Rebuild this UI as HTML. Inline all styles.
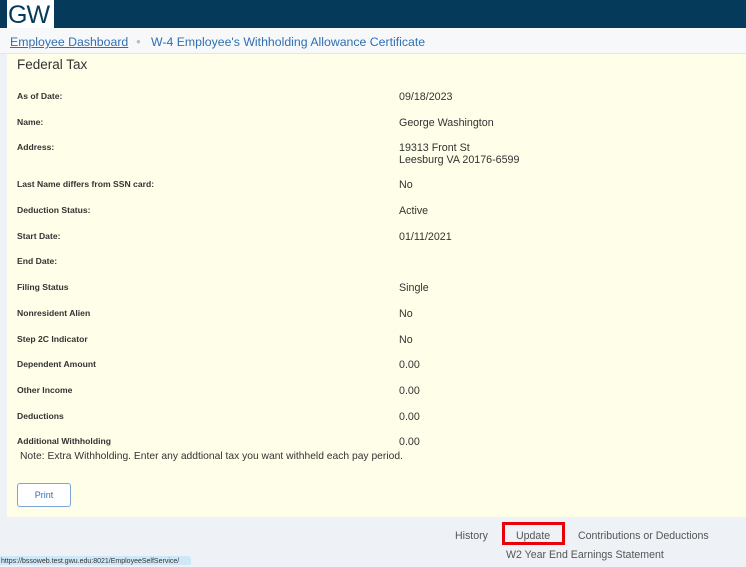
<!DOCTYPE html>
<html><head><style>
body{margin:0;width:746px;height:565px;overflow:hidden;background:#eef2f6;font-family:"Liberation Sans",sans-serif;position:relative}
.hdr{position:absolute;left:0;top:0;width:746px;height:28px;background:#053a5b}
.logo{position:absolute;left:7px;top:0;width:47px;height:28px;background:#fff;color:#053a5b;font-size:25px;line-height:30px;letter-spacing:-1px;text-indent:1px;overflow:hidden}
.bc{position:absolute;left:0;top:28px;width:746px;height:25px;background:#f7f8fa;border-bottom:1px solid #e3e6ea;font-size:12.3px;color:#2f6fb3;line-height:28px}
.bc a{position:absolute;left:10px;text-decoration:underline;color:#2f6fb3}
.panel{position:absolute;left:7px;top:54px;width:739px;height:463px;background:#fefee9}
.t{position:absolute;font-size:13px;color:#333}
.l{position:absolute;left:17px;font-size:8.6px;color:#333;font-weight:bold}
.v{position:absolute;left:399px;font-size:10.7px;color:#333}
.btn{position:absolute;left:17px;top:483px;width:54px;height:24px;border:1px solid #7aa5d6;border-radius:3px;background:#fff;font-size:9px;color:#2f6fb3;text-align:center;line-height:23px;box-sizing:border-box}
.f{position:absolute;font-size:10.6px;color:#555}
</style></head><body>
<div class="hdr"><div class="logo">GW</div></div>
<div class="bc"><a>Employee Dashboard</a><span style="position:absolute;left:136px;color:#bbb;font-size:8px">●</span><span style="position:absolute;left:151px">W-4 Employee's Withholding Allowance Certificate</span></div>
<div class="panel"></div>
<div class="t" style="left:17px;top:57px;font-size:13.5px">Federal Tax</div>
<div class="l" style="top:91px">As of Date:</div><div class="v" style="top:91px">09/18/2023</div>
<div class="l" style="top:117px">Name:</div><div class="v" style="top:117px">George Washington</div>
<div class="l" style="top:142px">Address:</div><div class="v" style="top:142px">19313 Front St<br>Leesburg VA 20176-6599</div>
<div class="l" style="top:179px">Last Name differs from SSN card:</div><div class="v" style="top:179px">No</div>
<div class="l" style="top:205px">Deduction Status:</div><div class="v" style="top:205px">Active</div>
<div class="l" style="top:231px">Start Date:</div><div class="v" style="top:231px">01/11/2021</div>
<div class="l" style="top:256px">End Date:</div>
<div class="l" style="top:282px">Filing Status</div><div class="v" style="top:282px">Single</div>
<div class="l" style="top:308px">Nonresident Alien</div><div class="v" style="top:308px">No</div>
<div class="l" style="top:334px">Step 2C Indicator</div><div class="v" style="top:334px">No</div>
<div class="l" style="top:359px">Dependent Amount</div><div class="v" style="top:359px">0.00</div>
<div class="l" style="top:385px">Other Income</div><div class="v" style="top:385px">0.00</div>
<div class="l" style="top:411px">Deductions</div><div class="v" style="top:411px">0.00</div>
<div class="l" style="top:436px">Additional Withholding</div><div class="v" style="top:436px">0.00</div>
<div class="v" style="left:20px;top:451px;font-size:10.3px">Note: Extra Withholding. Enter any addtional tax you want withheld each pay period.</div>
<div class="btn">Print</div>
<div class="f" style="left:455px;top:530px">History</div>
<div style="position:absolute;left:502px;top:522px;width:63px;height:23px;border:3px solid #e8000b;box-sizing:border-box"></div>
<div class="f" style="left:516px;top:530px">Update</div>
<div class="f" style="left:578px;top:530px">Contributions or Deductions</div>
<div class="f" style="left:506px;top:549px">W2 Year End Earnings Statement</div>
<div style="position:absolute;left:0;top:556px;width:190px;height:9px;background:#cfe8f7;border-radius:0 3px 0 0;font-size:7px;color:#333;line-height:11px;padding-left:1px">https://bssoweb.test.gwu.edu:8021/EmployeeSelfService/</div>
</body></html>
